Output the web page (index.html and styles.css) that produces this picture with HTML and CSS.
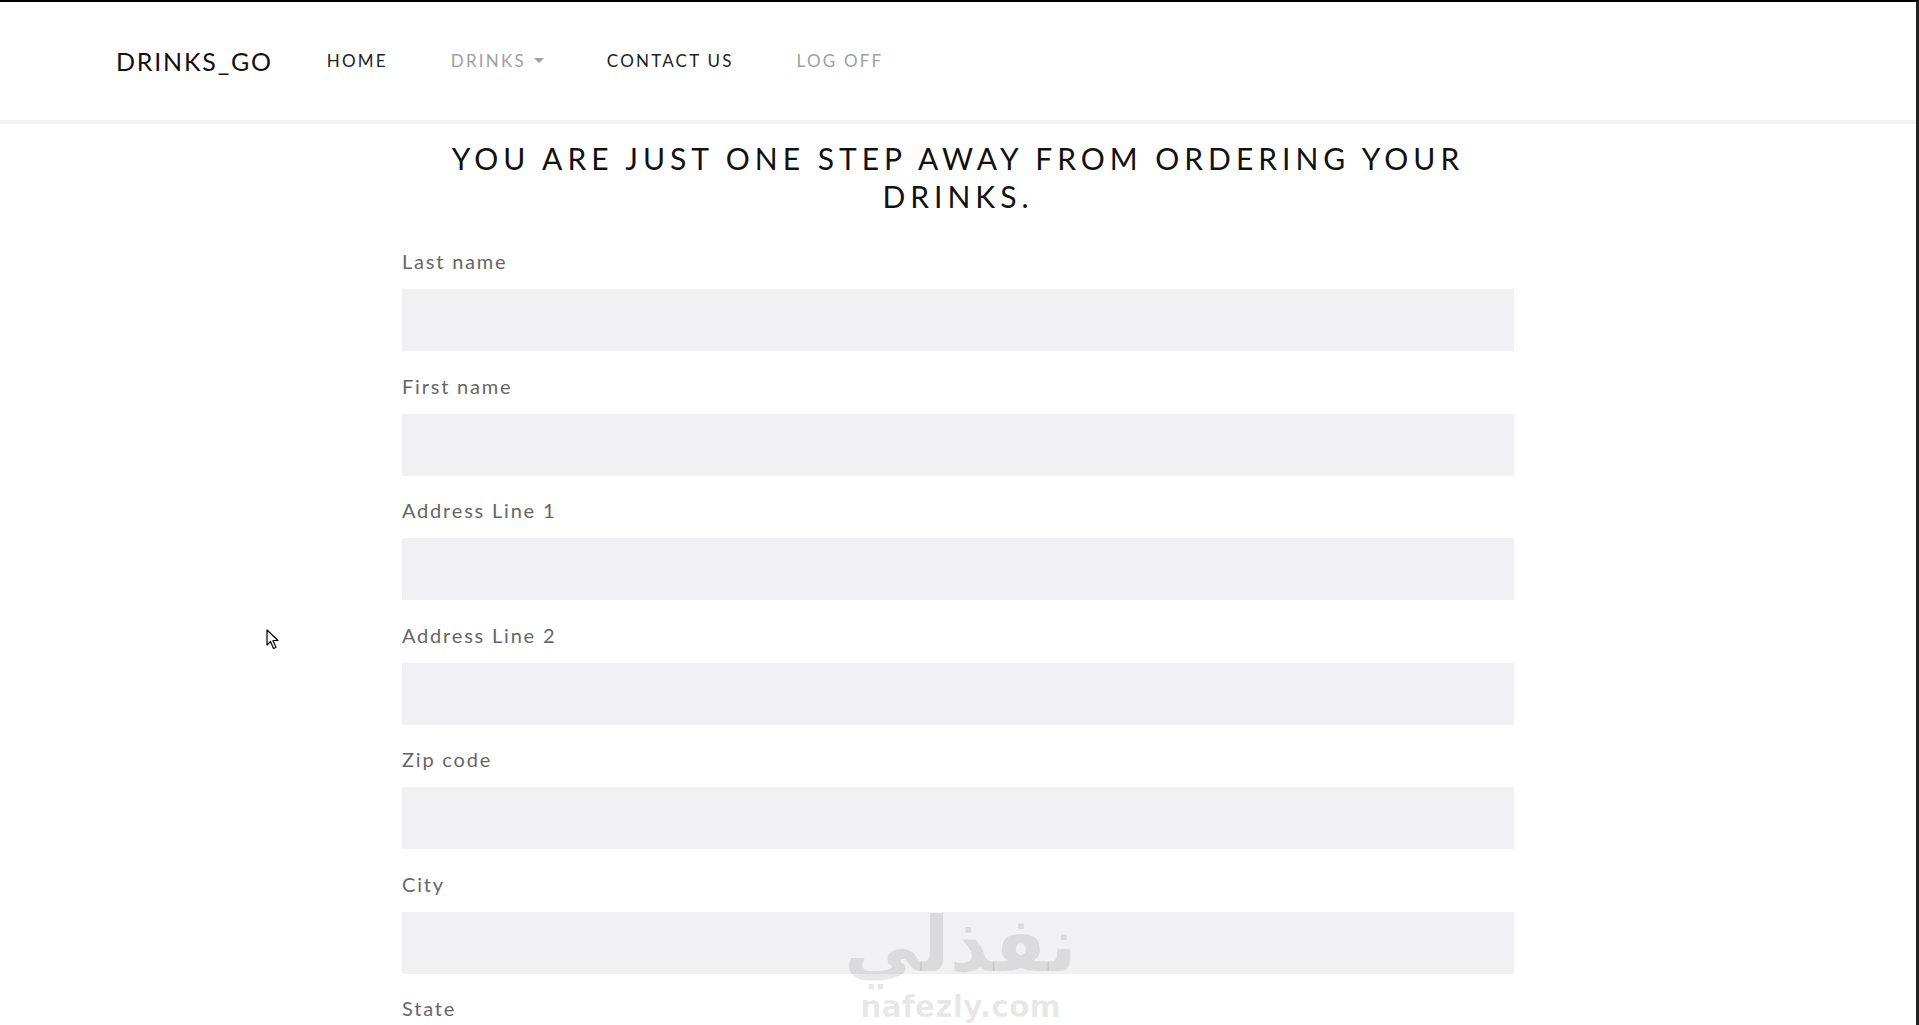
FILE: index.html
```html
<!DOCTYPE html>
<html lang="en">
<head>
<meta charset="utf-8">
<title>Drinks_Go - Order</title>
<link rel="stylesheet" href="styles.css">
</head>
<body>
<div class="frame">
  <header class="navbar">
    <a class="brand" href="#">DRINKS_GO</a>
    <nav class="nav">
      <a class="nav-link dark" href="#">HOME</a>
      <a class="nav-link muted" href="#">DRINKS <span class="caret"></span></a>
      <a class="nav-link dark" href="#">CONTACT US</a>
      <a class="nav-link muted" href="#">LOG OFF</a>
    </nav>
  </header>
  <main class="content">
    <h1 class="title">YOU ARE JUST ONE STEP AWAY FROM ORDERING YOUR DRINKS.</h1>
    <form class="order-form">
      <div class="field"><label>Last name</label><input type="text"></div>
      <div class="field"><label>First name</label><input type="text"></div>
      <div class="field"><label>Address Line 1</label><input type="text"></div>
      <div class="field"><label>Address Line 2</label><input type="text"></div>
      <div class="field"><label>Zip code</label><input type="text"></div>
      <div class="field"><label>City</label><input type="text"></div>
      <div class="field"><label>State</label><input type="text"></div>
    </form>
  </main>
  <div class="watermark">
    <span class="wm-ar">نفذلي</span>
    <span class="wm-en">nafezly.com</span>
  </div>
  <svg class="cursor" width="14" height="22" viewBox="0 0 14 22">
    <path d="M1 1 L1 16 L4.5 12.5 L7.5 19.5 L10 18.5 L7 11.5 L12 11.5 Z" fill="#fff" stroke="#000" stroke-width="1.2" stroke-linejoin="round"/>
  </svg>
</div>
</body>
</html>
```

FILE: styles.css
```css
html, body {
  margin: 0;
  padding: 0;
  background: #fff;
  height: 100%;
  overflow: hidden;
}

.frame {
  position: relative;
  height: 1025px;
  box-sizing: border-box;
  border-top: 2px solid #000;
  border-right: 3px solid #222;
  font-family: Lato, "Noto Sans", sans-serif;
  overflow: hidden;
}

.navbar {
  height: 117px;
  display: flex;
  align-items: center;
  padding-left: 116px;
  padding-bottom: 1px;
  background: #fff;
  border-bottom: 4px solid #f2f2f2;
}

.brand {
  font-size: 25px;
  letter-spacing: 1.8px;
  color: #111;
  text-decoration: none;
  margin-right: 54px;
}

.nav {
  display: flex;
  gap: 63px;
  align-items: center;
}

.nav-link {
  font-size: 17px;
  letter-spacing: 2.2px;
  text-decoration: none;
  display: flex;
  align-items: center;
}

.nav-link.dark { color: #222; }
.nav-link.muted { color: #a0a0a0; }

.caret {
  display: inline-block;
  width: 0;
  height: 0;
  margin-left: 8px;
  border-left: 5px solid transparent;
  border-right: 5px solid transparent;
  border-top: 5px solid #a0a0a0;
}

.content {
  width: 1112px;
  margin: 0 auto;
}

.title {
  margin: 15px 0 0;
  text-align: center;
  font-weight: 400;
  font-size: 30px;
  line-height: 38px;
  letter-spacing: 5px;
  color: #111;
}

.order-form {
  margin-top: 33px;
}

.field {
  display: flex;
  flex-direction: column;
  margin-bottom: 21.5px;
}

.field label {
  font-size: 20px;
  line-height: 27px;
  letter-spacing: 1.8px;
  color: #666;
  margin-bottom: 14px;
}

.field input {
  height: 62px;
  border: none;
  background: #f1f1f3;
  padding: 0 16px;
  box-sizing: border-box;
  outline: none;
}

.watermark {
  position: absolute;
  left: 853px;
  top: 898px;
  width: 215px;
  display: flex;
  flex-direction: column;
  align-items: center;
  pointer-events: none;
  color: rgba(0, 0, 0, 0.09);
}

.wm-ar {
  font-family: "DejaVu Sans", sans-serif;
  font-weight: 700;
  font-size: 76px;
  line-height: 90px;
}

.wm-en {
  font-family: "DejaVu Sans", sans-serif;
  font-weight: 700;
  font-size: 30px;
  line-height: 34px;
  letter-spacing: 0;
}

.cursor {
  position: absolute;
  left: 266px;
  top: 627px;
}
```
